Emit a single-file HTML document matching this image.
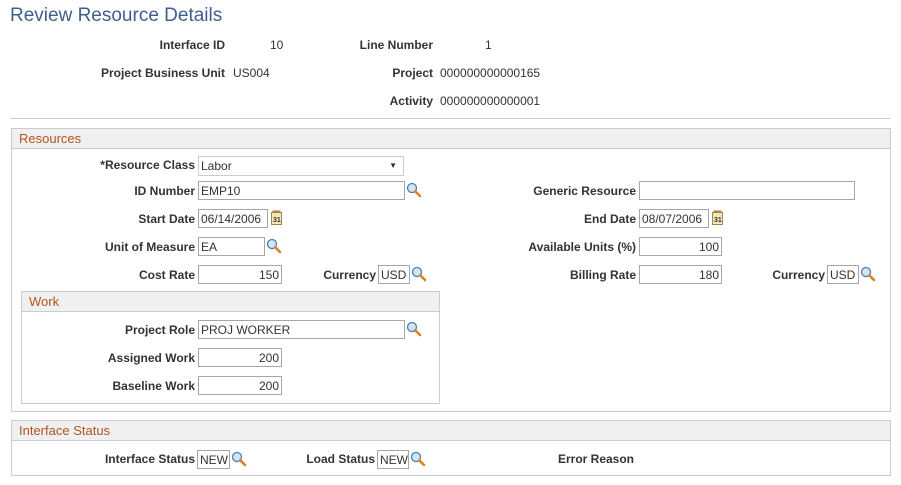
<!DOCTYPE html><html><head><style>
body{margin:0;width:901px;height:485px;background:#fff;font-family:"Liberation Sans",Arial,sans-serif;position:relative;overflow:hidden}
.a{position:absolute;white-space:nowrap}
.l{position:absolute;font-size:12px;font-weight:bold;color:#333;text-align:right;white-space:nowrap}
.v{position:absolute;font-size:12px;color:#333;white-space:nowrap}
.i{position:absolute;height:17px;border:1px solid #a6a6a6;background:#fff;font-size:12px;color:#333;line-height:18px;padding:0 2px;box-sizing:content-box;overflow:hidden;white-space:nowrap}
.r{text-align:right}
.box{position:absolute;border:1px solid #cbcbcb}
.hd{position:absolute;left:0;right:0;top:0;height:19px;background:#eef0f2;border-bottom:1px solid #cbcbcb;color:#b5531f;font-size:13px;line-height:19px;padding-left:7px}
svg{position:absolute}
</style></head><body>
<div class="a" style="left:10px;top:5px;font-size:19px;color:#3d5f8f">Review Resource Details</div>
<div class="l" style="right:676px;top:38px">Interface ID</div><div class="v" style="left:270px;top:38px">10</div>
<div class="l" style="right:468px;top:38px">Line Number</div><div class="v" style="left:485px;top:38px">1</div>
<div class="l" style="right:676px;top:66px">Project Business Unit</div><div class="v" style="left:233px;top:66px">US004</div>
<div class="l" style="right:468px;top:66px">Project</div><div class="v" style="left:440px;top:66px">000000000000165</div>
<div class="l" style="right:468px;top:94px">Activity</div><div class="v" style="left:440px;top:94px">000000000000001</div>
<div class="a" style="left:10px;top:118px;width:880px;height:1px;background:#cbcbcb"></div>

<div class="box" style="left:11px;top:128px;width:878px;height:282px"><div class="hd">Resources</div></div>
<div class="l" style="right:706px;top:158px">*Resource Class</div>
<div class="i" style="left:198px;top:156px;width:200px;height:18px;border-color:#ccc">Labor<span style="position:absolute;right:6px;top:0;font-size:8px">&#9660;</span></div>
<div class="l" style="right:706px;top:184px">ID Number</div><div class="i" style="left:198px;top:181px;width:201px">EMP10</div>
<div class="l" style="right:706px;top:212px">Start Date</div><div class="i" style="left:198px;top:209px;width:64px">06/14/2006</div>
<div class="l" style="right:706px;top:240px">Unit of Measure</div><div class="i" style="left:198px;top:237px;width:61px">EA</div>
<div class="l" style="right:706px;top:268px">Cost Rate</div><div class="i r" style="left:198px;top:265px;width:78px">150</div>
<div class="l" style="right:525px;top:268px">Currency</div><div class="i" style="left:378px;top:265px;width:26px">USD</div>
<div class="l" style="right:265px;top:184px">Generic Resource</div><div class="i" style="left:639px;top:181px;width:210px"></div>
<div class="l" style="right:265px;top:212px">End Date</div><div class="i" style="left:639px;top:209px;width:64px">08/07/2006</div>
<div class="l" style="right:265px;top:240px">Available Units (%)</div><div class="i r" style="left:639px;top:237px;width:77px">100</div>
<div class="l" style="right:265px;top:268px">Billing Rate</div><div class="i r" style="left:639px;top:265px;width:77px">180</div>
<div class="l" style="right:76px;top:268px">Currency</div><div class="i" style="left:827px;top:265px;width:26px">USD</div>

<div class="box" style="left:21px;top:291px;width:417px;height:111px"><div class="hd">Work</div></div>
<div class="l" style="right:706px;top:323px">Project Role</div><div class="i" style="left:198px;top:320px;width:201px">PROJ WORKER</div>
<div class="l" style="right:706px;top:351px">Assigned Work</div><div class="i r" style="left:198px;top:348px;width:78px">200</div>
<div class="l" style="right:706px;top:379px">Baseline Work</div><div class="i r" style="left:198px;top:376px;width:78px">200</div>

<div class="box" style="left:11px;top:420px;width:878px;height:54px"><div class="hd">Interface Status</div></div>
<div class="l" style="right:706px;top:452px">Interface Status</div><div class="i" style="left:197px;top:450px;width:27px">NEW</div>
<div class="l" style="right:526px;top:452px">Load Status</div><div class="i" style="left:377px;top:450px;width:26px">NEW</div>
<div class="l" style="right:267px;top:452px">Error Reason</div>

<svg width="0" height="0"><defs><g id="m"><circle cx="6" cy="6" r="4.5" fill="#cfe6f7" stroke="#4a7fb0" stroke-width="1.3"/><path d="M9.3 9.3L14 14" stroke="#d9822b" stroke-width="2.6" stroke-linecap="round"/></g>
<g id="c"><rect x="1.5" y="2.5" width="10" height="12" fill="#f5e6b5" stroke="#a08848"/><rect x="2.5" y="0.5" width="8" height="2" fill="#a08848"/><text x="3" y="12" font-size="7" font-family="Liberation Sans" font-weight="bold" fill="#333">31</text></g></defs></svg>
<svg style="left:406px;top:182px" width="16" height="16"><use href="#m"/></svg>
<svg style="left:266px;top:238px" width="16" height="16"><use href="#m"/></svg>
<svg style="left:411px;top:266px" width="16" height="16"><use href="#m"/></svg>
<svg style="left:860px;top:266px" width="16" height="16"><use href="#m"/></svg>
<svg style="left:406px;top:321px" width="16" height="16"><use href="#m"/></svg>
<svg style="left:231px;top:451px" width="16" height="16"><use href="#m"/></svg>
<svg style="left:410px;top:451px" width="16" height="16"><use href="#m"/></svg>
<svg style="left:270px;top:210px" width="14" height="16"><use href="#c"/></svg>
<svg style="left:711px;top:210px" width="14" height="16"><use href="#c"/></svg>
</body></html>
